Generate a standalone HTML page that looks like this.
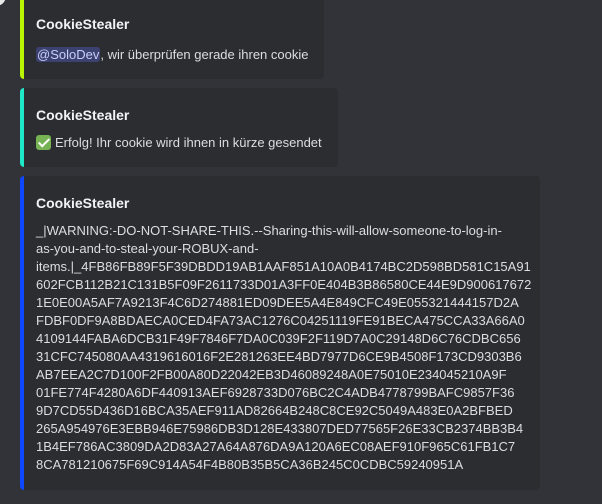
<!DOCTYPE html>
<html><head><meta charset="utf-8"><style>
html,body{margin:0;padding:0;background:#313338;width:602px;height:504px;overflow:hidden;font-family:"Liberation Sans","DejaVu Sans",sans-serif;}
.av{position:absolute;left:-14px;top:-14px;width:20px;height:20px;border-radius:50%;background:#e8e8e8;}
.e{position:absolute;left:20px;background:#2b2d31;border-left:4px solid;border-radius:4px;box-sizing:border-box;}
.t{position:absolute;left:12px;color:#f2f3f5;font-weight:bold;font-size:14px;}
.b{position:absolute;left:12px;color:#dbdee1;font-size:13px;line-height:18px;white-space:nowrap;}
.m{background:#3c4270;color:#c9cdfb;border-radius:3px;padding:0 1px;}
.ck{display:inline-block;width:15px;height:15px;background:#77b255;border-radius:3px;vertical-align:-3px;margin-right:4px;position:relative}
.ck:after{content:"";position:absolute;left:5px;top:1px;width:4px;height:9px;border:solid #fff;border-width:0 2px 2px 0;transform:rotate(45deg)}
</style></head><body>
<div class="av"></div>
<div class="e" style="top:-4px;width:304px;height:83px;border-color:#b9f401;">
<div class="t" style="top:20px">CookieStealer</div>
<div class="b" style="top:50px"><span class="m">@SoloDev</span>, wir überprüfen gerade ihren cookie</div>
</div>
<div class="e" style="top:88px;width:318px;height:79px;border-color:#1fe8c8;">
<div class="t" style="top:19px">CookieStealer</div>
<div class="b" style="top:46px"><span class="ck"></span>Erfolg! Ihr cookie wird ihnen in kürze gesendet</div>
</div>
<div class="e" style="top:176px;width:520px;height:314px;border-color:#0d47ff;">
<div class="t" style="top:19px">CookieStealer</div>
<div class="b" style="top:46px">_|WARNING:-DO-NOT-SHARE-THIS.--Sharing-this-will-allow-someone-to-log-in-<br>as-you-and-to-steal-your-ROBUX-and-<br>items.|_4FB86FB89F5F39DBDD19AB1AAF851A10A0B4174BC2D598BD581C15A91<br>602FCB112B21C131B5F09F2611733D01A3FF0E404B3B86580CE44E9D900617672<br>1E0E00A5AF7A9213F4C6D274881ED09DEE5A4E849CFC49E055321444157D2A<br>FDBF0DF9A8BDAECA0CED4FA73AC1276C04251119FE91BECA475CCA33A66A0<br>4109144FABA6DCB31F49F7846F7DA0C039F2F119D7A0C29148D6C76CDBC656<br>31CFC745080AA4319616016F2E281263EE4BD7977D6CE9B4508F173CD9303B6<br>AB7EEA2C7D100F2FB00A80D22042EB3D46089248A0E75010E234045210A9F<br>01FE774F4280A6DF440913AEF6928733D076BC2C4ADB4778799BAFC9857F36<br>9D7CD55D436D16BCA35AEF911AD82664B248C8CE92C5049A483E0A2BFBED<br>265A954976E3EBB946E75986DB3D128E433807DED77565F26E33CB2374BB3B4<br>1B4EF786AC3809DA2D83A27A64A876DA9A120A6EC08AEF910F965C61FB1C7<br>8CA781210675F69C914A54F4B80B35B5CA36B245C0CDBC59240951A</div>
</div>
</body></html>
